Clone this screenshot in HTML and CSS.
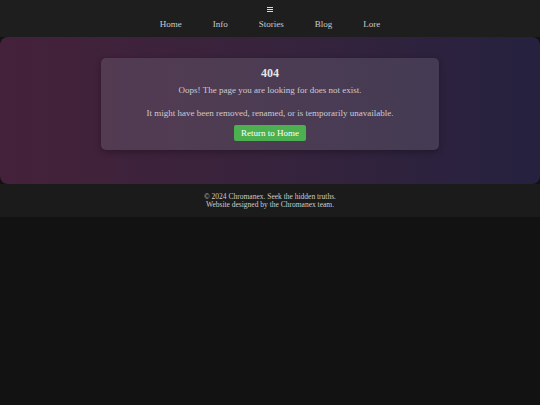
FILE: index.html
```html
<!DOCTYPE html>
<html lang="en">
<head>
<meta charset="utf-8">
<title>404 - Chromanex</title>
<link rel="stylesheet" href="styles.css">
</head>
<body>
<header class="site-header">
  <svg class="menu-toggle" width="6" height="5" viewBox="0 0 6 5" aria-label="Menu">
    <rect x="0" y="0" width="6" height="1" fill="#d8d8d8"/>
    <rect x="0" y="2" width="6" height="1" fill="#d8d8d8"/>
    <rect x="0" y="4" width="6" height="1" fill="#d8d8d8"/>
  </svg>
  <nav class="main-nav">
    <a href="#">Home</a>
    <a href="#">Info</a>
    <a href="#">Stories</a>
    <a href="#">Blog</a>
    <a href="#">Lore</a>
  </nav>
</header>
<main class="hero">
  <section class="error-card">
    <h1 class="error-code">404</h1>
    <p class="error-msg">Oops! The page you are looking for does not exist.</p>
    <p class="error-msg">It might have been removed, renamed, or is temporarily unavailable.</p>
    <a class="home-btn" href="#">Return to Home</a>
  </section>
</main>
<footer class="site-footer">
  <p>© 2024 Chromanex. Seek the hidden truths.</p>
  <p>Website designed by the Chromanex team.</p>
</footer>
</body>
</html>
```

FILE: styles.css
```css
html, body {
  margin: 0;
  padding: 0;
}
body {
  background: #121212;
  color: #cccccc;
  font-family: Georgia, "Liberation Serif", serif;
}
.site-header {
  background: #1e1e1e;
  height: 37px;
  display: flex;
  flex-direction: column;
  align-items: center;
}
.menu-toggle {
  display: block;
  margin-top: 7px;
}
.main-nav {
  display: flex;
  gap: 31px;
  margin-top: 6px;
}
.main-nav a {
  color: #cccccc;
  text-decoration: none;
  font-size: 9px;
  line-height: 12px;
}
.hero {
  background: linear-gradient(to right, #45213a, #37233c 50%, #25213f);
  border-radius: 8px;
  padding: 21px 101px 34px 101px;
  display: block;
}
.error-card {
  background: rgba(140, 135, 150, 0.25);
  border-radius: 5px;
  box-shadow: 0 2px 6px rgba(0, 0, 0, 0.3);
  height: 92px;
  box-sizing: border-box;
  padding-top: 8px;
  display: flex;
  flex-direction: column;
  align-items: center;
  text-align: center;
}
.error-code {
  margin: 0;
  font-size: 12px;
  line-height: 14px;
  color: #e6e6e6;
  font-weight: bold;
}
.error-msg {
  margin: 4px 0 11px 0;
  font-size: 9px;
  line-height: 12px;
  color: #d0cad0;
}
.error-msg + .error-msg {
  margin: 0 0 6px 0;
}
.home-btn {
  background: #4caf50;
  color: #ffffff;
  text-decoration: none;
  font-size: 9px;
  line-height: 16px;
  height: 16px;
  width: 72px;
  border-radius: 2px;
  text-align: center;
}
.site-footer {
  background: #1b1b1b;
  height: 33px;
  box-sizing: border-box;
  padding-top: 9px;
  text-align: center;
}
.site-footer p {
  margin: 0;
  font-size: 7.5px;
  line-height: 8px;
  color: #cccccc;
}
```
